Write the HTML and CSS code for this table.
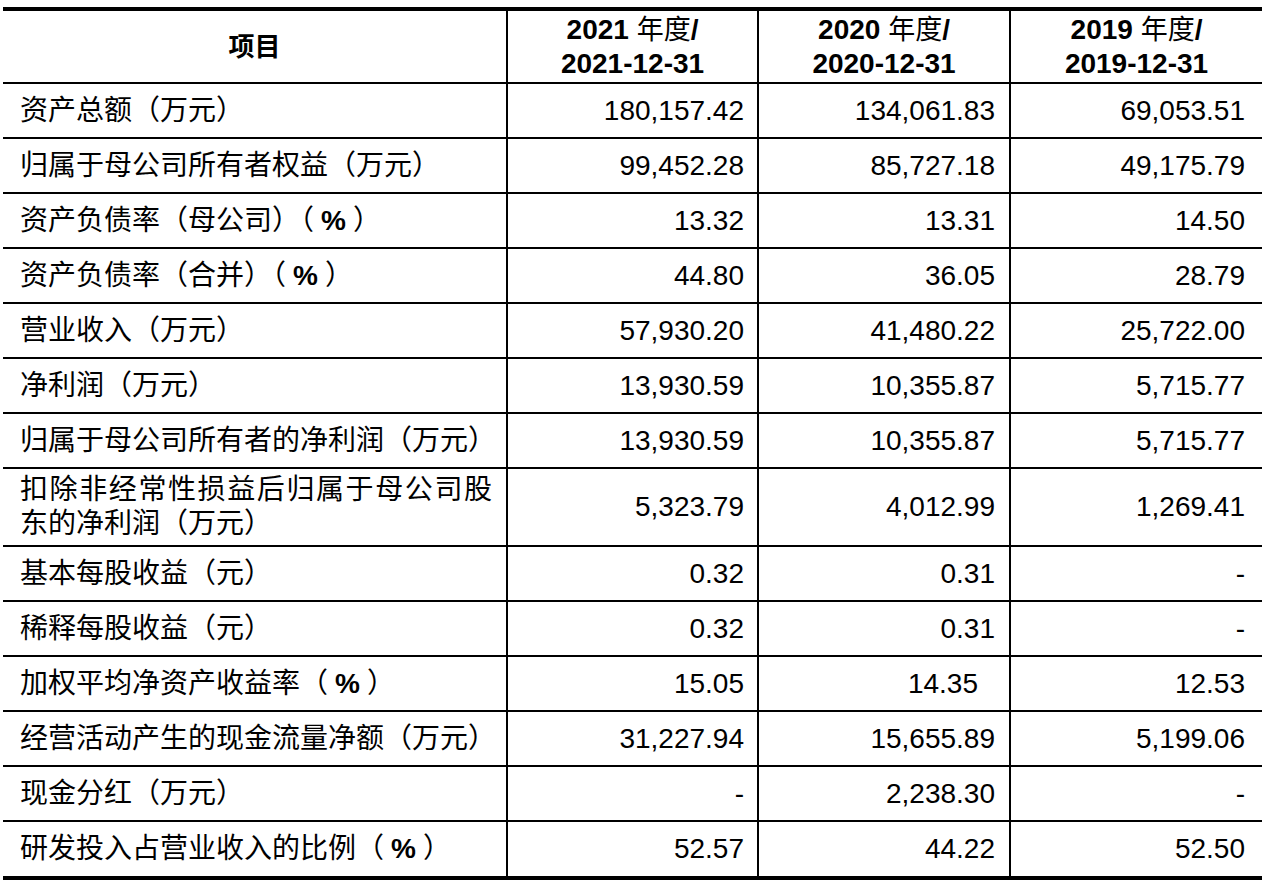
FILE: index.html
```html
<!DOCTYPE html>
<html lang="zh-CN">
<head>
<meta charset="utf-8">
<title>主要财务数据</title>
<link rel="stylesheet" href="styles.css">
</head>
<body>
<table class="fin">
  <colgroup>
    <col class="c1"><col class="c2"><col class="c3"><col class="c4">
  </colgroup>
  <thead>
    <tr class="head">
      <th class="item">项目</th>
      <th>2021 <span class="cjk">年度</span>/<br>2021-12-31</th>
      <th>2020 <span class="cjk">年度</span>/<br>2020-12-31</th>
      <th>2019 <span class="cjk">年度</span>/<br>2019-12-31</th>
    </tr>
  </thead>
  <tbody>
    <tr><td class="lab">资产总额（万元）</td><td class="n">180,157.42</td><td class="n">134,061.83</td><td class="n">69,053.51</td></tr>
    <tr><td class="lab">归属于母公司所有者权益（万元）</td><td class="n">99,452.28</td><td class="n">85,727.18</td><td class="n">49,175.79</td></tr>
    <tr><td class="lab">资产负债率（母公司）（<b>%</b>）</td><td class="n">13.32</td><td class="n">13.31</td><td class="n">14.50</td></tr>
    <tr><td class="lab">资产负债率（合并）（<b>%</b>）</td><td class="n">44.80</td><td class="n">36.05</td><td class="n">28.79</td></tr>
    <tr><td class="lab">营业收入（万元）</td><td class="n">57,930.20</td><td class="n">41,480.22</td><td class="n">25,722.00</td></tr>
    <tr><td class="lab">净利润（万元）</td><td class="n">13,930.59</td><td class="n">10,355.87</td><td class="n">5,715.77</td></tr>
    <tr><td class="lab">归属于母公司所有者的净利润（万元）</td><td class="n">13,930.59</td><td class="n">10,355.87</td><td class="n">5,715.77</td></tr>
    <tr class="tall"><td class="lab"><div class="just">扣除非经常性损益后归属于母公司股</div><div>东的净利润（万元）</div></td><td class="n">5,323.79</td><td class="n">4,012.99</td><td class="n">1,269.41</td></tr>
    <tr><td class="lab">基本每股收益（元）</td><td class="n">0.32</td><td class="n">0.31</td><td class="n">-</td></tr>
    <tr><td class="lab">稀释每股收益（元）</td><td class="n">0.32</td><td class="n">0.31</td><td class="n">-</td></tr>
    <tr><td class="lab">加权平均净资产收益率（<b>%</b>）</td><td class="n">15.05</td><td class="n shift">14.35</td><td class="n">12.53</td></tr>
    <tr><td class="lab">经营活动产生的现金流量净额（万元）</td><td class="n">31,227.94</td><td class="n">15,655.89</td><td class="n">5,199.06</td></tr>
    <tr><td class="lab">现金分红（万元）</td><td class="n">-</td><td class="n">2,238.30</td><td class="n">-</td></tr>
    <tr class="last"><td class="lab">研发投入占营业收入的比例（<b>%</b>）</td><td class="n">52.57</td><td class="n">44.22</td><td class="n">52.50</td></tr>
  </tbody>
</table>
</body>
</html>
```

FILE: styles.css
```css
html, body {
  margin: 0;
  padding: 0;
  background: #fff;
}

body {
  font-family: "Liberation Sans", "Noto Sans CJK SC", sans-serif;
  font-size: 28px;
  color: #000;
  overflow: hidden;
}

.fin {
  border-collapse: collapse;
  table-layout: fixed;
  width: 1259px;
  margin: 7px 0 0 3px;
}

.c1 { width: 504px; }
.c2 { width: 251px; }
.c3 { width: 252px; }
.c4 { width: 252px; }

.fin th,
.fin td {
  border: 2px solid #000;
  padding: 0;
  vertical-align: middle;
  line-height: 34px;
}

.fin th:first-child,
.fin td:first-child {
  border-left: none;
}

.fin th:last-child,
.fin td:last-child {
  border-right: none;
}

.head th {
  border-top: 4px solid #000;
  height: 71px;
  font-weight: bold;
  text-align: center;
  font-size: 28px;
}

.head th.item {
  font-size: 26px;
}

.head .cjk {
  font-weight: normal;
  font-size: 27px;
}

.fin tbody tr {
  height: 55px;
}

.fin tbody tr.tall {
  height: 78px;
}

.fin tbody tr.last {
  height: 57px;
}

.fin tr.last td {
  border-bottom: 4px solid #000;
}

.fin td.lab {
  padding-left: 17px;
  padding-right: 14px;
  white-space: nowrap;
  text-align: left;
}

.fin td.lab b {
  font-family: "Liberation Sans", sans-serif;
  font-weight: bold;
  margin: 0 7px;
}

.fin td.lab .just {
  text-align: justify;
  text-align-last: justify;
  white-space: normal;
}

.fin td.n {
  text-align: right;
  padding-right: 13px;
}

.fin td.n:nth-child(3) {
  padding-right: 14px;
}

.fin td.n:nth-child(4) {
  padding-right: 17px;
}

.fin td.n.shift {
  padding-right: 31px;
}
```
